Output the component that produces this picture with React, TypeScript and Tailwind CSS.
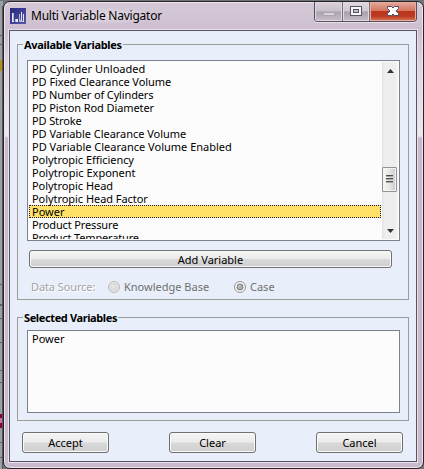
import type { ReactNode } from "react";

const variables = [
  { name: "PD Cylinder Unloaded", tracking: "tracking-normal" },
  { name: "PD Fixed Clearance Volume", tracking: "tracking-[-0.05px]" },
  { name: "PD Number of Cylinders", tracking: "tracking-[-0.14px]" },
  { name: "PD Piston Rod Diameter", tracking: "tracking-[-0.09px]" },
  { name: "PD Stroke", tracking: "tracking-[-0.12px]" },
  { name: "PD Variable Clearance Volume", tracking: "tracking-[-0.04px]" },
  { name: "PD Variable Clearance Volume Enabled", tracking: "tracking-normal" },
  { name: "Polytropic Efficiency", tracking: "tracking-[-0.05px]" },
  { name: "Polytropic Exponent", tracking: "tracking-normal" },
  { name: "Polytropic Head", tracking: "tracking-[-0.05px]" },
  { name: "Polytropic Head Factor", tracking: "tracking-[-0.05px]" },
  { name: "Power", tracking: "tracking-normal" },
  { name: "Product Pressure", tracking: "tracking-[-0.13px]" },
  { name: "Product Temperature", tracking: "tracking-[-0.16px]" },
];

function Group({ title, titleClass, className, children }: { title: string; titleClass: string; className: string; children: ReactNode }) {
  return (
    <section className={`relative border border-[#9c9c9c] px-[9px] ${className}`}>
      <h2 className={`absolute -top-[8px] left-[5px] h-4 bg-[#e8effa] px-px text-[11px] leading-4 font-bold whitespace-nowrap ${titleClass}`}>{title}</h2>
      {children}
    </section>
  );
}

function Button({ className, children }: { className: string; children: ReactNode }) {
  return (
    <button className={`flex items-center justify-center rounded-[3px] border border-[#707070] bg-[linear-gradient(#f5f5f5_0%,#ebebeb_48%,#d9d9d9_52%,#cecece_100%)] text-[11px] leading-none shadow-[inset_0_0_0_1px_#fafafa] ${className}`}>
      {children}
    </button>
  );
}

function Radio({ checked = false }: { checked?: boolean }) {
  return (
    <svg className="h-3 w-3 shrink-0" viewBox="0 0 12 12">
      <circle cx="6" cy="6" r="5.5" fill={checked ? "#f2f2f2" : "#e9e9e9"} stroke={checked ? "#979797" : "#b9b9b9"} />
      <circle cx="6" cy="6" r={checked ? "3" : "3.8"} fill={checked ? "#aaaaaa" : "#dddddd"} stroke={checked ? "#828282" : "#dddddd"} strokeWidth="1" />
      <circle cx="5.2" cy="5.2" r="1.3" fill={checked ? "#c2c2c2" : "#eaeaea"} />
    </svg>
  );
}

function AppIcon() {
  return (
    <svg className="h-4 w-4" viewBox="0 0 16 16" shapeRendering="crispEdges">
      <defs>
        <linearGradient id="app" x2="1" y2="1">
          <stop stopColor="#28287e" />
          <stop offset="1" stopColor="#5555ac" />
        </linearGradient>
      </defs>
      <path fill="url(#app)" d="M0 0h16v16H0z" />
      <path fill="#e6e6ee" d="M2 5h1v9H2zM3 13h1v1H3zM6 11h2v3H6zM11 4h1v9h-1zM13 6h1v8h-1z" />
      <path fill="#b5b5d5" d="M3 5h1v8H3zM5 11h1v3H5zM9 6h1v8H9zM10 12h1v2h-1zM11 13h2v1h-2z" />
    </svg>
  );
}

function WindowControls() {
  return (
    <div className="flex h-[20px] w-[103px] overflow-hidden rounded-b-[4px] border border-t-0 border-[#55505a] shadow-[0_1px_0_#e8e0ea]">
      <div className="flex w-7 items-center justify-center border-r border-[#77717b] bg-[linear-gradient(#d9d2db_0%,#c7bfca_48%,#aaa2ae_52%,#c8bfca_100%)] shadow-[inset_0_0_0_1px_#e0d9e2]">
        <div className="mt-1 h-1 w-3 border border-[#aaa5ae] bg-[#d8d4da]" />
      </div>
      <div className="flex w-[27px] items-center justify-center border-r border-[#77717b] bg-[linear-gradient(#e0dbe2_0%,#cbc5ce_48%,#a8a1ad_52%,#c5bdc8_100%)] shadow-[inset_0_0_0_1px_#e0d9e2]">
        <svg className="mb-px h-[10px] w-3" viewBox="0 0 12 10" shapeRendering="crispEdges">
          <path fill="#555566" d="M0 0h12v10H0z" />
          <path fill="#f6f6f8" d="M1 1h10v8H1z" />
          <path fill="#555566" d="M3 3h6v4H3z" />
          <path fill="#c4bdc9" d="M4 4h4v2H4z" />
        </svg>
      </div>
      <div className="flex flex-1 items-center justify-center bg-[linear-gradient(#e5a99c_0%,#d47763_45%,#bd351d_50%,#bb3b22_75%,#dc7a5f_100%)] shadow-[inset_0_0_0_1px_#e8ad9f]">
        <svg className="mb-0.5 h-[10px] w-3" viewBox="0 0 12 10">
          <path d="M.5.5h4L6 2 7.500.5h4v2L9 5l2.500 2.500v2h-4L6 8 4.500 9.500h-4v-2L3 5 .5 2.500z" fill="#fff" stroke="#514c62" />
        </svg>
      </div>
    </div>
  );
}

function Scrollbar() {
  return (
    <div className="ml-px flex w-4 shrink-0 flex-col items-center bg-[linear-gradient(90deg,#e4e4e4,#efefef_20%,#ededed_80%,#f6f6f6)]">
      <svg className="mt-[7px] h-1 w-[7px]" viewBox="0 0 7 4"><path fill="#333" d="M3.5 0 7 4H0z" /></svg>
      <div className="mt-[94px] flex h-[25px] w-[15px] items-center justify-center self-start rounded-[1px] border border-[#939393] bg-[linear-gradient(90deg,#f8f8f8,#e6e6e6_50%,#c8c8cb)] shadow-[inset_0_0_0_1px_#f4f4f4]">
        <svg className="h-[9px] w-[7px]" viewBox="0 0 7 9" shapeRendering="crispEdges"><path fill="#4f4f4f" d="M0 0h7v1H0zM0 3h7v1H0zM0 6h7v1H0z" /><path fill="#aaaaaa" d="M0 1h7v1H0zM0 4h7v1H0zM0 7h7v1H0z" /></svg>
      </div>
      <svg className="mt-[37px] h-1 w-[7px]" viewBox="0 0 7 4"><path fill="#333" d="M0 0h7L3.5 4z" /></svg>
    </div>
  );
}

function BackgroundEdge() {
  return (
    <svg className="h-full w-[3px] shrink-0" viewBox="0 0 3 469" shapeRendering="crispEdges">
      <path fill="#999fa3" d="M0 0h3v469H0z" />
      <path fill="#b58f1c" d="M0 59h2v11H0z" />
      <path fill="#5d6466" d="M0 34h2v1H0zM0 43h2v1H0zM0 284h2v1H0zM0 304h2v2H0zM0 318h2v1H0zM0 342h2v1H0zM0 370h2v1H0zM0 382h2v1H0zM0 442h2v1H0zM0 457h2v1H0z" />
      <path fill="#8c0034" d="M0 414h2v14H0z" />
      <path fill="#c277ac" d="M0 418h2v5H0z" />
      <path fill="#555555" d="M2 5h1v464H2z" />
    </svg>
  );
}

export default function App() {
  return (
    <div className="flex h-[469px] w-[424px] overflow-hidden bg-[#6f7576] pt-px font-['Noto_Sans','Open_Sans',sans-serif] text-black">
      <BackgroundEdge />
      <main className="flex h-[468px] w-[421px] shrink-0 flex-col rounded-[7px] border border-[#28232b] bg-[linear-gradient(#d5c9d7_0px,#cdbfd0_28px,#ddd3df_60px,#eee8ef_134px,#c9b9cd_136px,#c9b9cd_100%)] shadow-[inset_0_0_0_1px_#eee4ef]">
        <header className="flex h-7 shrink-0 px-[6px]">
          <div className="mt-[6px] flex h-4 items-center">
            <AppIcon />
            <h1 className="ml-[5px] bg-[radial-gradient(ellipse,#e4dbe6_0%,transparent_75%)] text-[12px] leading-4 font-normal tracking-[-0.23px] whitespace-nowrap">Multi Variable Navigator</h1>
          </div>
          <div className="ml-auto"><WindowControls /></div>
        </header>
        <div className="mr-[6px] ml-[5px] flex h-[432px] shrink-0 flex-col border border-[#59545f] bg-[#e8effa] px-[7px] pt-[13px] shadow-[0_0_0_1px_#e9e1eb]">
          <Group title="Available Variables" titleClass="tracking-[-0.33px]" className="h-64 pt-[15px]">
            <div className="flex h-[181px] w-[373px] overflow-hidden border border-[#7c828d] bg-[#fcfcfc] py-px pl-px">
              <div className="w-[352px] shrink-0 overflow-hidden">
                {variables.map((v) => (
                  <div key={v.name} className={`h-[13px] pl-[3px] text-[11px] leading-[13px] whitespace-nowrap ${v.tracking} ${v.name === "Power" ? "bg-[#ffe168] outline-1 -outline-offset-1 outline-dotted outline-[#19194d]" : ""}`}>{v.name}</div>
                ))}
              </div>
              <Scrollbar />
            </div>
            <Button className="mt-[9px] ml-[2px] h-[18px] w-[363px]">Add Variable</Button>
            <div className="mt-[12px] ml-1 flex h-[14px] items-center text-[11px] leading-[14px] text-[#707070]">
              <span className="w-[77px] tracking-[-0.1px] text-[#a5a5a5] [text-shadow:1px_1px_0_#fff]">Data Source:</span>
              <Radio /><span className="ml-1 w-[110px]">Knowledge Base</span>
              <Radio checked /><span className="ml-1">Case</span>
            </div>
          </Group>
          <Group title="Selected Variables" titleClass="tracking-[-0.38px]" className="mt-[17px] h-[104px] pt-[12px]">
            <div className="h-[83px] w-[373px] border border-[#7c828d] bg-[#fcfcfc] pl-1 text-[11px] leading-[15px]">Power</div>
          </Group>
          <footer className="mt-[11px] flex justify-between pr-[6px] pl-[5px]">
            <Button className="h-[21px] w-[87px]">Accept</Button>
            <Button className="h-[21px] w-[87px]">Clear</Button>
            <Button className="h-[21px] w-[87px]">Cancel</Button>
          </footer>
        </div>
      </main>
    </div>
  );
}
